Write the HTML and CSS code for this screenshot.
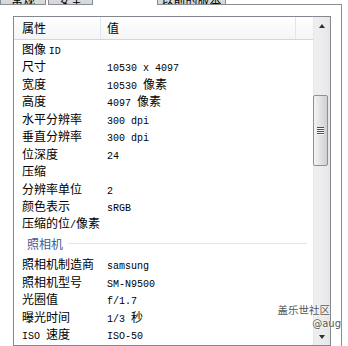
FILE: index.html
```html
<!DOCTYPE html>
<html>
<head>
<meta charset="utf-8">
<link rel="stylesheet" href="styles.css">
</head>
<body>
<div class="page">
  <div class="tabs">
    <div class="tab t1">常规</div>
    <div class="tab t2">安全</div>
    <div class="tab sel"></div>
    <div class="tab t4">以前的版本</div>
    <div class="tabline"></div>
  </div>
  <div class="panel">
    <div class="list">
      <div class="main">
        <div class="head">
          <div class="hc c1">属性</div>
          <div class="hc c2">值</div>
          <div class="hc c3"></div>
        </div>
        <div class="rows">
          <div class="row"><span class="k">图像 <span class="m">ID</span></span><span class="v"></span></div>
          <div class="row"><span class="k">尺寸</span><span class="v"><span class="m">10530 x 4097</span></span></div>
          <div class="row"><span class="k">宽度</span><span class="v"><span class="m">10530 </span>像素</span></div>
          <div class="row"><span class="k">高度</span><span class="v"><span class="m">4097 </span>像素</span></div>
          <div class="row"><span class="k">水平分辨率</span><span class="v"><span class="m">300 dpi</span></span></div>
          <div class="row"><span class="k">垂直分辨率</span><span class="v"><span class="m">300 dpi</span></span></div>
          <div class="row"><span class="k">位深度</span><span class="v"><span class="m">24</span></span></div>
          <div class="row"><span class="k">压缩</span><span class="v"></span></div>
          <div class="row"><span class="k">分辨率单位</span><span class="v"><span class="m">2</span></span></div>
          <div class="row"><span class="k">颜色表示</span><span class="v"><span class="m">sRGB</span></span></div>
          <div class="row"><span class="k">压缩的位<span class="m">/</span>像素</span><span class="v"></span></div>
          <div class="group"><span class="gt">照相机</span><span class="gl"></span></div>
          <div class="row"><span class="k">照相机制造商</span><span class="v"><span class="m">samsung</span></span></div>
          <div class="row"><span class="k">照相机型号</span><span class="v"><span class="m">SM-N9500</span></span></div>
          <div class="row"><span class="k">光圈值</span><span class="v"><span class="m">f/1.7</span></span></div>
          <div class="row"><span class="k">曝光时间</span><span class="v"><span class="m">1/3 </span>秒</span></div>
          <div class="row"><span class="k"><span class="m">ISO </span>速度</span><span class="v"><span class="m">ISO-50</span></span></div>
          <div class="row"><span class="k">曝光补偿</span><span class="v"><span class="m">0 </span>步骤</span></div>
        </div>
      </div>
      <div class="scroll">
        <div class="sb-btn"><span class="arr-up"></span></div>
        <div class="sb-track">
          <div class="thumb">
            <div class="grip"><i></i><i></i><i></i><i></i></div>
          </div>
        </div>
        <div class="sb-btn"><span class="arr-down"></span></div>
      </div>
    </div>
  </div>
  <div class="wm">
    <div class="wm1">盖乐世社区</div>
    <div class="wm2">@aug</div>
  </div>
</div>
</body>
</html>
```

FILE: styles.css
```css
* { box-sizing: border-box; }
html, body { margin: 0; padding: 0; background: #fff; }
.page {
  position: relative;
  width: 348px;
  height: 346px;
  overflow: hidden;
  background: #fff;
  font-family: "Noto Sans CJK SC", "Noto Sans", sans-serif;
  font-size: 12px;
  color: #000;
}
.m {
  font-family: "Liberation Mono", "DejaVu Sans Mono", monospace;
  font-size: 10px;
}

/* tabs (only their bottoms are visible) */
.tabs {
  display: flex;
  align-items: flex-end;
  height: 5px;
  width: 342px;
  overflow: hidden;
}
.tab {
  height: 20px;
  border: 1px solid #898c95;
  background: linear-gradient(#eeeeee, #d6d6d6);
  text-align: center;
  line-height: 27px;
  font-size: 12px;
  color: #000;
  overflow: hidden;
}
.t1 { width: 46px; }
.t2 { width: 45px; margin-left: 2px; }
.sel {
  width: 64px;
  height: 24px;
  background: #fff;
  border-bottom: none;
  border-color: #fff;
}
.t4 { width: 69px; }
.tabline {
  flex: 1;
  height: 1px;
  background: #898c95;
}

/* panel */
.panel {
  width: 342px;
  height: 341px;
  border-right: 1px solid #898c95;
  padding: 11px 0 0 13px;
}
.list {
  width: 318px;
  height: 330px;
  border: 1px solid #828790;
  display: flex;
  overflow: hidden;
  background: #fff;
}
.main {
  width: 299px;
  overflow: hidden;
}
.head {
  display: flex;
  height: 23px;
  background: linear-gradient(#ffffff, #f4f5f7);
  border-bottom: 1px solid #d5d5d5;
}
.hc {
  line-height: 22px;
  height: 22px;
}
.c1 { width: 87px; padding-left: 8px; border-right: 1px solid #e3e6ea; }
.c2 { width: 195px; padding-left: 6px; border-right: 1px solid #e3e6ea; }
.c3 { flex: 1; }

.rows { display: flex; flex-direction: column; }
.row {
  display: flex;
  height: 17.45px;
  line-height: 17.45px;
  white-space: nowrap;
}
.k { width: 87px; padding-left: 8px; }
.v { padding-left: 6px; }

.group {
  display: flex;
  align-items: center;
  height: 23.5px;
  padding-left: 13px;
  padding-right: 6px;
}
.gt { color: #3b5a9a; }
.gl {
  flex: 1;
  height: 1px;
  margin-left: 5px;
  background: #e0e4ec;
}

/* scrollbar */
.scroll {
  width: 17px;
  display: flex;
  flex-direction: column;
  background: linear-gradient(90deg, #e2e2e2 0, #eeeeee 1px, #ececec 60%, #e6e6e6 100%);
}
.sb-btn {
  height: 17px;
  display: flex;
  align-items: center;
  justify-content: center;
}
.arr-up {
  width: 0; height: 0;
  border-left: 3.5px solid transparent;
  border-right: 3.5px solid transparent;
  border-bottom: 4px solid #303030;
}
.arr-down {
  width: 0; height: 0;
  border-left: 3.5px solid transparent;
  border-right: 3.5px solid transparent;
  border-top: 4px solid #303030;
}
.sb-track { flex: 1; padding-top: 61px; }
.thumb {
  width: 15px;
  height: 71px;
  border: 1px solid #8f8f8f;
  border-radius: 2px;
  background: linear-gradient(90deg, #f4f4f4 0, #e4e4e4 45%, #cfcfcf 100%);
  display: flex;
  align-items: center;
  justify-content: center;
}
.grip { display: flex; flex-direction: column; gap: 1px; }
.grip i {
  display: block;
  width: 7px;
  height: 1px;
  background: #4e4e4e;
  box-shadow: 0 1px 0 #fafafa;
}

/* watermark */
.wm {
  position: absolute;
  left: 276px;
  top: 302px;
  width: 70px;
  text-align: right;
  color: #555;
  text-shadow: 0 0 2px #fff, 0 0 1px #fff;
}
.wm1 { font-size: 10.5px; line-height: 15px; padding-right: 16px; }
.wm2 { font-family: "DejaVu Sans", sans-serif; font-size: 10px; line-height: 12px; padding-right: 5px; margin-top: 1px; }
```
